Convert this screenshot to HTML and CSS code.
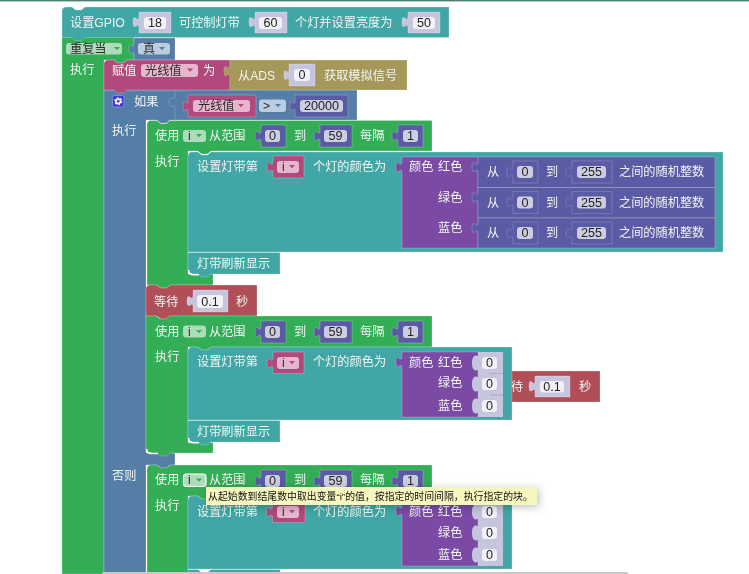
FILE: index.html
```html
<!DOCTYPE html>
<html lang="zh-CN">
<head>
<meta charset="utf-8">
<title>Blocks</title>
<link rel="stylesheet" href="styles.css">
</head>
<body>
<div class="topline"></div>
<svg class="canvas" width="749" height="573" viewBox="0 1 749 573" xmlns="http://www.w3.org/2000/svg">
<defs>
  <path id="arr" d="M-3 -1.5H3L0 1.8z"/>
</defs>

<!-- loose wait block behind the LED block -->
<g>
  <path class="b red" d="M470 371H600V402H470z"/>
  <text class="t" x="511" y="390.500">待</text>
  <path class="b lav" d="M535 376h35v21h-35V392c0-8-6 6-6-6s6 4 6-6z"/>
  <rect class="f-w" x="540" y="381" width="24" height="11.500" rx="3"/>
  <text class="n" x="552" y="391">0.1</text>
  <text class="t" x="579" y="390.500">秒</text>
</g>

<!-- repeat -->
<path class="b green" d="M62 37H134V60H127l-3.500 3h-6l-3.500-3H104V574H62z"/>
<rect class="dd-g" x="66" y="43" width="56" height="11.500" rx="3"/>
<text class="d" x="70" y="53">重复当</text>
<use href="#arr" class="a-g" x="117" y="48.500"/>
<path class="b blue" d="M134 38h41v22h-41V55c0-8-5 5-5-6s5 3 5-6z"/>
<rect class="dd-b" x="138" y="43" width="32" height="11.500" rx="3"/>
<text class="d" x="143" y="53">真</text>
<use href="#arr" class="a-b" x="162" y="48.500"/>
<text class="t" x="70" y="73.500">执行</text>

<!-- if -->
<path class="b blue" d="M104 90H357V120H170l-3.500 3h-6l-3.500-3H146V453H175V465H170l-3.500 3h-6l-3.500-3H146V574H104z"/>
<path class="seam" d="M175 90V96c0 6-6-3-6 6s6 0 6 6V120"/>
<g>
  <rect class="ic" x="112.500" y="95.500" width="11.500" height="11.500" rx="2"/>
  <circle class="gear" cx="118.250" cy="101.250" r="2.300"/>
  <circle class="teeth" cx="118.250" cy="101.250" r="3.500"/>
</g>
<text class="t" x="134" y="105.500">如果</text>
<path class="b pink" d="M188 95h68v22h-68V112c0-8-5 5-5-6s5 3 5-6z"/>
<rect class="dd-p" x="193" y="100" width="57" height="12" rx="3"/>
<text class="d" x="198" y="110">光线值</text>
<use href="#arr" class="a-p" x="241" y="105.500"/>
<rect class="dd-b" x="259" y="99.500" width="27" height="12.500" rx="3"/>
<text class="d" x="263" y="110">&gt;</text>
<use href="#arr" class="a-b" x="278" y="105.500"/>
<path class="b math" d="M295 95h53v22h-53V112c0-8-5 5-5-6s5 3 5-6z"/>
<rect class="f-l" x="300" y="100" width="43" height="12" rx="3"/>
<text class="n" x="321.500" y="110.300">20000</text>
<text class="t" x="112" y="135">执行</text>
<text class="t" x="112" y="480">否则</text>

<!-- loop 1 -->
<path class="b green" d="M147 125a4 4 0 0 1 4-4.500H157l3.500 3h6l3.500-3H432V151H211l-3.500 3h-6l-3.500-3H188V274H213V285H170l-3.500 3h-6l-3.500-3H147z"/>
<g>
  <text class="t" x="155" y="140.300">使用</text>
  <rect class="dd-g" x="183" y="130" width="23" height="12" rx="3"/>
  <text class="d" x="188" y="140">i</text>
  <use href="#arr" class="a-g" x="199" y="135.500"/>
  <text class="t" x="209" y="140.300">从范围</text>
  <path class="b math" d="M261 125h25v22h-25V142c0-8-6 5-6-6s6 3 6-6z"/>
  <rect class="f-l" x="265" y="130" width="15" height="12" rx="3"/>
  <text class="n" x="272.500" y="140.300">0</text>
  <text class="t" x="294" y="140.300">到</text>
  <path class="b math" d="M320 125h32v22h-32V142c0-8-6 5-6-6s6 3 6-6z"/>
  <rect class="f-l" x="324" y="130" width="23" height="12" rx="3"/>
  <text class="n" x="335.500" y="140.300">59</text>
  <text class="t" x="360" y="140.300">每隔</text>
  <path class="b math" d="M398 125h25v22h-25V142c0-8-6 5-6-6s6 3 6-6z"/>
  <rect class="f-l" x="403" y="130" width="15" height="12" rx="3"/>
  <text class="n" x="410.500" y="140.300">1</text>
  <text class="t" x="155" y="166.300">执行</text>
</g>
<!-- LED 1 -->
<path class="b teal" d="M188 156a4 4 0 0 1 4-4H198l3.500 3h6l3.500-3H723V252H188z"/>
<text class="t" x="197" y="171.300">设置灯带第</text>
<path class="b pink" d="M273 156h31v22h-31V173c0-8-6 5-6-6s6 3 6-6z"/>
<rect class="dd-p" x="277" y="161" width="22" height="12" rx="3"/>
<text class="d" x="282" y="171">i</text>
<use href="#arr" class="a-p" x="292" y="166.500"/>
<text class="t" x="313" y="171.300">个灯的颜色为</text>
<path class="b purple" d="M402 157h76v91h-76V173c0-8-6 5-6-6s6 3 6-6z"/>
<text class="t" x="409" y="171.300">颜色</text>
<text class="t" x="438" y="171.300">红色</text>
<text class="t" x="438" y="202.300">绿色</text>
<text class="t" x="438" y="232.300">蓝色</text>

<g>
  <path class="b math" d="M478 157h237v30.500h-237V173c0-8-6 5-6-6s6 3 6-6z"/>
  <text class="t" x="487" y="176.300">从</text>
  <path class="sh" d="M513 161h25v22h-25V178c0-8-6 5-6-6s6 3 6-6z"/>
  <rect class="f-l" x="517" y="166" width="16" height="12" rx="3"/>
  <text class="n" x="525" y="176.300">0</text>
  <text class="t" x="546" y="176.300">到</text>
  <path class="sh" d="M572 161h40v22h-40V178c0-8-6 5-6-6s6 3 6-6z"/>
  <rect class="f-l" x="577" y="166" width="29" height="12" rx="3"/>
  <text class="n" x="591.500" y="176.300">255</text>
  <text class="t" x="619" y="176.300">之间的随机整数</text>
</g>
<g>
  <path class="b math" d="M478 187.500h237v30.500h-237V203c0-8-6 5-6-6s6 3 6-6z"/>
  <text class="t" x="487" y="206.800">从</text>
  <path class="sh" d="M513 191.500h25v22h-25V208c0-8-6 5-6-6s6 3 6-6z"/>
  <rect class="f-l" x="517" y="196.500" width="16" height="12" rx="3"/>
  <text class="n" x="525" y="206.800">0</text>
  <text class="t" x="546" y="206.800">到</text>
  <path class="sh" d="M572 191.500h40v22h-40V208c0-8-6 5-6-6s6 3 6-6z"/>
  <rect class="f-l" x="577" y="196.500" width="29" height="12" rx="3"/>
  <text class="n" x="591.500" y="206.800">255</text>
  <text class="t" x="619" y="206.800">之间的随机整数</text>
</g>
<g>
  <path class="b math" d="M478 218h237v30h-237V234c0-8-6 5-6-6s6 3 6-6z"/>
  <text class="t" x="487" y="237.300">从</text>
  <path class="sh" d="M513 222h25v22h-25V239c0-8-6 5-6-6s6 3 6-6z"/>
  <rect class="f-l" x="517" y="227" width="16" height="12" rx="3"/>
  <text class="n" x="525" y="237.300">0</text>
  <text class="t" x="546" y="237.300">到</text>
  <path class="sh" d="M572 222h40v22h-40V239c0-8-6 5-6-6s6 3 6-6z"/>
  <rect class="f-l" x="577" y="227" width="29" height="12" rx="3"/>
  <text class="n" x="591.500" y="237.300">255</text>
  <text class="t" x="619" y="237.300">之间的随机整数</text>
</g>
<path class="b teal" d="M188 252.500H280V274H211l-3.500 3h-6l-3.500-3H193a5 5 0 0 1-5-5z"/>
<path class="gap" d="M188.500 270q0 4.800 5 4.800H199"/>
<text class="t" x="197" y="267.500">灯带刷新显示</text>

<!-- wait -->
<path class="b red" d="M146 289a4 4 0 0 1 4-4H157l3.500 3h6l3.500-3H257V316H170l-3.500 3h-6l-3.500-3H146z"/>
<text class="t" x="154" y="305.500">等待</text>
<path class="b lav" d="M193 290h35v22h-35V307c0-8-6 5-6-6s6 3 6-6z"/>
<rect class="f-w" x="197" y="295" width="26" height="13" rx="3"/>
<text class="n" x="210" y="305.500">0.1</text>
<text class="t" x="236" y="305.500">秒</text>

<!-- loop 2 -->
<path class="b green" d="M146 316H156.500l3.500 3h6l3.500-3H432V347H211l-3.500 3h-6l-3.500-3H188V442.500H213V453H170l-3.500 3h-6l-3.500-3H151a5 5 0 0 1-5-5z"/>
<path class="gap" d="M146.500 449q0 4.500 5 4.500H158"/>
<g>
  <text class="t" x="155" y="336.300">使用</text>
  <rect class="dd-g" x="183" y="325.500" width="23" height="12" rx="3"/>
  <text class="d" x="188" y="335.800">i</text>
  <use href="#arr" class="a-g" x="199" y="331.500"/>
  <text class="t" x="209" y="336.300">从范围</text>
  <path class="b math" d="M261 321h25v22h-25V338c0-8-6 5-6-6s6 3 6-6z"/>
  <rect class="f-l" x="265" y="326" width="15" height="12" rx="3"/>
  <text class="n" x="272.500" y="336.300">0</text>
  <text class="t" x="294" y="336.300">到</text>
  <path class="b math" d="M320 321h32v22h-32V338c0-8-6 5-6-6s6 3 6-6z"/>
  <rect class="f-l" x="324" y="326" width="23" height="12" rx="3"/>
  <text class="n" x="335.500" y="336.300">59</text>
  <text class="t" x="360" y="336.300">每隔</text>
  <path class="b math" d="M398 321h25v22h-25V338c0-8-6 5-6-6s6 3 6-6z"/>
  <rect class="f-l" x="403" y="326" width="15" height="12" rx="3"/>
  <text class="n" x="410.500" y="336.300">1</text>
  <text class="t" x="155" y="361.300">执行</text>
</g>
<path class="b teal" d="M188 351a4 4 0 0 1 4-4H198l3.500 3h6l3.500-3H512V420H188z"/>
<text class="t" x="197" y="366.300">设置灯带第</text>
<path class="b pink" d="M273 352h31v21.500h-31V369c0-8-6 5-6-6s6 3 6-6z"/>
<rect class="dd-p" x="277" y="357" width="22" height="12" rx="3"/>
<text class="d" x="282" y="367">i</text>
<use href="#arr" class="a-p" x="292" y="362.500"/>
<text class="t" x="313" y="366.300">个灯的颜色为</text>
<path class="b purple" d="M402 352h76v65h-76V368c0-8-6 5-6-6s6 3 6-6z"/>
<rect class="lav" x="478" y="352" width="25" height="65"/>
<path class="seam2" d="M490 373.500H503M490 395H503"/>
<path class="lav" d="M478 356v14c-2 1-6 1-6-7s4-8 6-7zM478 377v14c-2 1-6 1-6-7s4-8 6-7zM478 399v14c-2 1-6 1-6-7s4-8 6-7z"/>
<text class="t" x="409" y="367.300">颜色</text>
<text class="t" x="438" y="367.300">红色</text>
<text class="t" x="438" y="387.300">绿色</text>
<text class="t" x="438" y="410.300">蓝色</text>
<rect class="f-w" x="482" y="357" width="15" height="12" rx="3"/>
<text class="n" x="489.500" y="367.300">0</text>
<rect class="f-w" x="482" y="378" width="15" height="12" rx="3"/>
<text class="n" x="489.500" y="388.300">0</text>
<rect class="f-w" x="482" y="400" width="15" height="12" rx="3"/>
<text class="n" x="489.500" y="410.300">0</text>
<path class="b teal" d="M188 420.500H280V442H211l-3.500 3h-6l-3.500-3H193a5 5 0 0 1-5-5z"/>
<path class="gap" d="M188.500 438q0 4.800 5 4.800H199"/>
<text class="t" x="197" y="436">灯带刷新显示</text>

<!-- loop 3 -->
<path class="b green" d="M147 469a4 4 0 0 1 4-4H157l3.500 3h6l3.500-3H432V496H211l-3.500 3h-6l-3.500-3H188V574H147z"/>
<g>
  <text class="t" x="155" y="484.300">使用</text>
  <rect class="dd-g focus" x="183.500" y="474" width="22.500" height="12.500" rx="3"/>
  <text class="d" x="188" y="484.300">i</text>
  <use href="#arr" class="a-g" x="199" y="480"/>
  <text class="t" x="209" y="484.300">从范围</text>
  <path class="b math" d="M261 470h25v22h-25V487c0-8-6 5-6-6s6 3 6-6z"/>
  <rect class="f-l" x="265" y="475" width="15" height="12" rx="3"/>
  <text class="n" x="272.500" y="485.300">0</text>
  <text class="t" x="294" y="484.300">到</text>
  <path class="b math" d="M320 470h32v22h-32V487c0-8-6 5-6-6s6 3 6-6z"/>
  <rect class="f-l" x="324" y="475" width="23" height="12" rx="3"/>
  <text class="n" x="335.500" y="485.300">59</text>
  <text class="t" x="360" y="484.300">每隔</text>
  <path class="b math" d="M398 470h25v22h-25V487c0-8-6 5-6-6s6 3 6-6z"/>
  <rect class="f-l" x="403" y="475" width="15" height="12" rx="3"/>
  <text class="n" x="410.500" y="485.300">1</text>
  <text class="t" x="155" y="510.300">执行</text>
</g>
<path class="b teal" d="M188 500a4 4 0 0 1 4-4H198l3.500 3h6l3.500-3H512V569H188z"/>
<text class="t" x="197" y="516.300">设置灯带第</text>
<path class="b pink" d="M272.500 501h32.500v21.500h-32.500V518c0-8-6 5-6-6s6 3 6-6z"/>
<rect class="dd-p" x="277" y="506" width="22" height="12" rx="3"/>
<text class="d" x="282" y="516">i</text>
<use href="#arr" class="a-p" x="292" y="511.500"/>
<text class="t" x="313" y="516.300">个灯的颜色为</text>
<path class="b purple" d="M402 501h76v65h-76V517c0-8-6 5-6-6s6 3 6-6z"/>
<rect class="lav" x="478" y="501" width="25" height="65"/>
<path class="lav" d="M478 505v14c-2 1-6 1-6-7s4-8 6-7zM478 526v14c-2 1-6 1-6-7s4-8 6-7zM478 548v14c-2 1-6 1-6-7s4-8 6-7z"/>
<text class="t" x="409" y="516.300">颜色</text>
<text class="t" x="438" y="516.300">红色</text>
<text class="t" x="438" y="537.300">绿色</text>
<text class="t" x="438" y="559.300">蓝色</text>
<rect class="f-w" x="482" y="506" width="15" height="12" rx="3"/>
<text class="n" x="489.500" y="516.300">0</text>
<rect class="f-w" x="482" y="527" width="15" height="12" rx="3"/>
<text class="n" x="489.500" y="537.300">0</text>
<rect class="f-w" x="482" y="549" width="15" height="12" rx="3"/>
<text class="n" x="489.500" y="559.300">0</text>
<path class="b teal" d="M188 569.500H198l3.500 3h6l3.500-3H280V574H188z"/>

<!-- assign -->
<path class="b pink" d="M104 64a4 4 0 0 1 4-4H114l3.500 3h6l3.500-3H230V90H127l-3.500 3h-6l-3.500-3H104z"/>
<text class="t" x="112" y="74.500">赋值</text>
<rect class="dd-p" x="141" y="64" width="57" height="13" rx="3"/>
<text class="d" x="145" y="74.500">光线值</text>
<use href="#arr" class="a-p" x="190" y="70"/>
<text class="t" x="203" y="74.500">为</text>
<path class="b olive" d="M230 60h177v30h-177V77c0-8-6 5-6-6s6 3 6-6z"/>
<text class="t" x="238" y="79.500">从ADS</text>
<path class="b lav" d="M289 64h26v22h-26V81c0-8-5 5-5-6s5 3 5-6z"/>
<rect class="f-w" x="294" y="69" width="16" height="12" rx="3"/>
<text class="n" x="302" y="79.300">0</text>
<text class="t" x="324" y="79.500">获取模拟信号</text>

<!-- GPIO -->
<path class="b teal" d="M62 11a4 4 0 0 1 4-4H72l3.500 3h6l3.500-3H449V37.500H85l-3.500 3h-6l-3.500-3H62z"/>
<text class="t" x="70" y="26.500">设置GPIO</text>
<path class="b lav" d="M139 12h32v21h-32V28c0-8-6 5-6-6s6 3 6-6z"/>
<rect class="f-w" x="144" y="17" width="22" height="12" rx="3"/>
<text class="n" x="155" y="27.300">18</text>
<text class="t" x="179" y="26.500">可控制灯带</text>
<path class="b lav" d="M255 12h32v21h-32V28c0-8-6 5-6-6s6 3 6-6z"/>
<rect class="f-w" x="259" y="17" width="23" height="12" rx="3"/>
<text class="n" x="270.500" y="27.300">60</text>
<text class="t" x="295" y="26.500">个灯并设置亮度为</text>
<path class="b lav" d="M408 12h32v21h-32V28c0-8-6 5-6-6s6 3 6-6z"/>
<rect class="f-w" x="413" y="17" width="22" height="12" rx="3"/>
<text class="n" x="424" y="27.300">50</text>

<!-- tooltip -->
<g class="tip">
  <rect class="tip-bg" x="206" y="487" width="331" height="18"/>
  <text class="tip-t" x="208" y="499.500">从起始数到结尾数中取出变量“i”的值，按指定的时间间隔，执行指定的块。</text>
</g>
<rect class="scroll" x="102" y="572" width="526" height="3" rx="1.500"/>
</svg>
</body>
</html>
```

FILE: styles.css
```css
html, body {
  margin: 0;
  padding: 0;
  background: #fff;
  overflow: hidden;
}
.topline {
  height: 1px;
  background: #4b7f70;
  box-shadow: 0 1px 0 #b5cdc5;
  position: relative;
  z-index: 1;
}
.canvas {
  display: block;
  filter: blur(0.35px);
}
.b {
  stroke: rgba(255, 255, 255, 0.28);
  stroke-width: 0.8;
}
.teal { fill: #40a7a6; }
.green { fill: #34ad57; }
.blue { fill: #557ea6; }
.pink { fill: #b1497c; }
.olive { fill: #a6985b; }
.purple { fill: #7b4aa4; }
.math { fill: #5b5ba5; }
.red { fill: #b04f57; }
.lav { fill: #c5c5de; }
.sh {
  fill: #5b5ba5;
  stroke: #7e7eb9;
  stroke-width: 0.8;
}
.seam {
  fill: none;
  stroke: #7c9cbc;
  stroke-width: 0.8;
}
.seam2 {
  fill: none;
  stroke: #c88a94;
  stroke-width: 0.6;
}
.gap {
  fill: none;
  stroke: #fff;
  stroke-width: 1.6;
}
.f-w { fill: #f2f1f7; }
.f-l { fill: #cdcde2; }
.dd-g { fill: #aedcba; }
.dd-b { fill: #bbcde0; }
.dd-p { fill: #e6b6cf; }
.a-g { fill: #34ad57; }
.a-b { fill: #557ea6; }
.a-p { fill: #b1497c; }
.focus {
  stroke: #fff;
  stroke-width: 1.2;
}
.t, .d, .n, .tip-t {
  font-family: "Liberation Sans", "Noto Sans CJK SC", sans-serif;
}
.t {
  font-size: 12.2px;
  fill: #f1f6f3;
}
.d {
  font-size: 12.2px;
  fill: #2c2c2c;
}
.n {
  font-size: 12.6px;
  fill: #222;
  text-anchor: middle;
}
.ic {
  fill: #3d3bd6;
  stroke: #8f8fe6;
  stroke-width: 0.8;
}
.gear {
  fill: none;
  stroke: #fff;
  stroke-width: 1.6;
}
.teeth {
  fill: none;
  stroke: #fff;
  stroke-width: 1.1;
  stroke-dasharray: 1.8 1.85;
}
.tip {
  filter: drop-shadow(2px 2px 4px rgba(0, 0, 0, 0.25));
}
.tip-bg { fill: #f6f6bf; }
.tip-t {
  font-size: 9.9px;
  fill: #111;
}
.scroll { fill: #c8c8c8; }
```
